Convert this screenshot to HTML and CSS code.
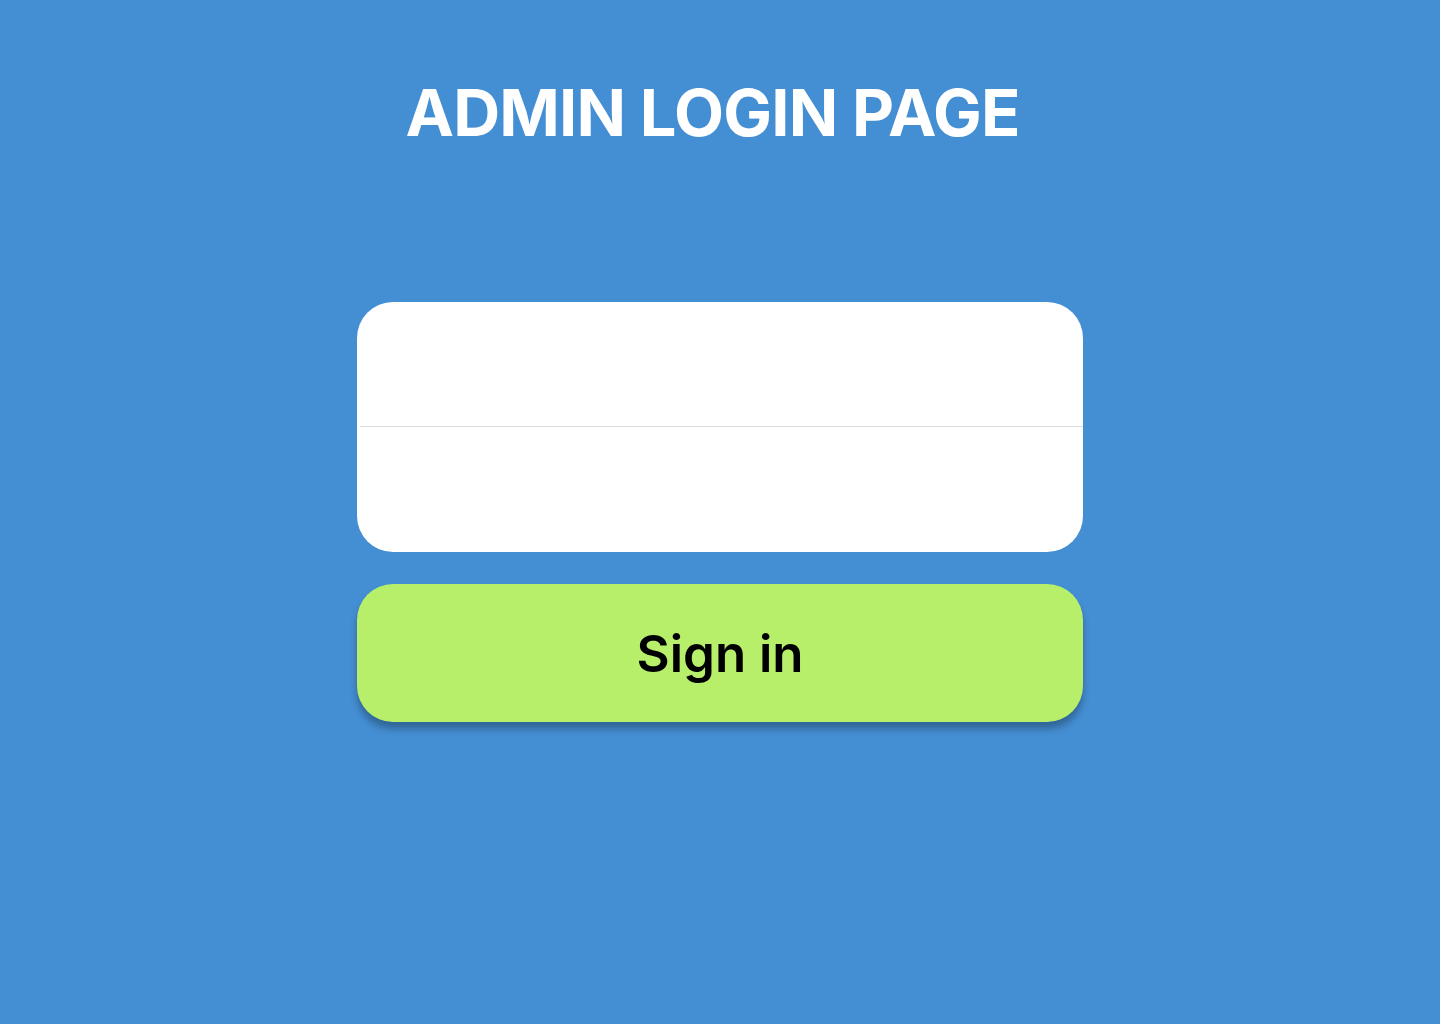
FILE: index.html
```html
<!DOCTYPE html>
<html lang="en">
<head>
<meta charset="utf-8">
<title>Admin Login</title>
<link rel="stylesheet" href="styles.css">
</head>
<body>
<main class="page">
  <h1 class="title">ADMIN LOGIN PAGE</h1>
  <form class="login">
    <div class="fields">
      <input class="field field-user" type="text" aria-label="Username">
      <input class="field" type="password" aria-label="Password">
    </div>
    <button class="signin" type="button">Sign in</button>
  </form>
</main>
</body>
</html>
```
FILE: styles.css
```css
html, body {
  margin: 0;
  padding: 0;
}
body {
  background: #448ed3;
  font-family: Inter, "Noto Sans", sans-serif;
  min-height: 1024px;
}
.page {
  display: flex;
  flex-direction: column;
  align-items: center;
  padding-top: 78px;
}
.title {
  margin: 0 15px 0 0;
  color: #ffffff;
  font-size: 65px;
  font-weight: 700;
  line-height: 70px;
  letter-spacing: -0.8px;
}
.login {
  margin-top: 154px;
  width: 726px;
  display: flex;
  flex-direction: column;
  gap: 32px;
}
.fields {
  background: #ffffff;
  border-radius: 36px;
  display: flex;
  flex-direction: column;
  overflow: hidden;
}
.field {
  height: 125px;
  border: none;
  outline: none;
  background: transparent;
  padding: 0 36px;
  font-family: inherit;
  font-size: 32px;
  box-sizing: border-box;
}
.field-user {
  height: 125px;
  border-bottom: 1px solid #dcdcdc;
  margin-left: 3px;
}
.signin {
  height: 138px;
  border: none;
  border-radius: 36px;
  background: #b8ef6a;
  color: #000000;
  font-family: inherit;
  font-size: 51px;
  font-weight: 600;
  box-shadow: 0 7px 7px rgba(0, 0, 0, 0.28);
  cursor: pointer;
}
```
